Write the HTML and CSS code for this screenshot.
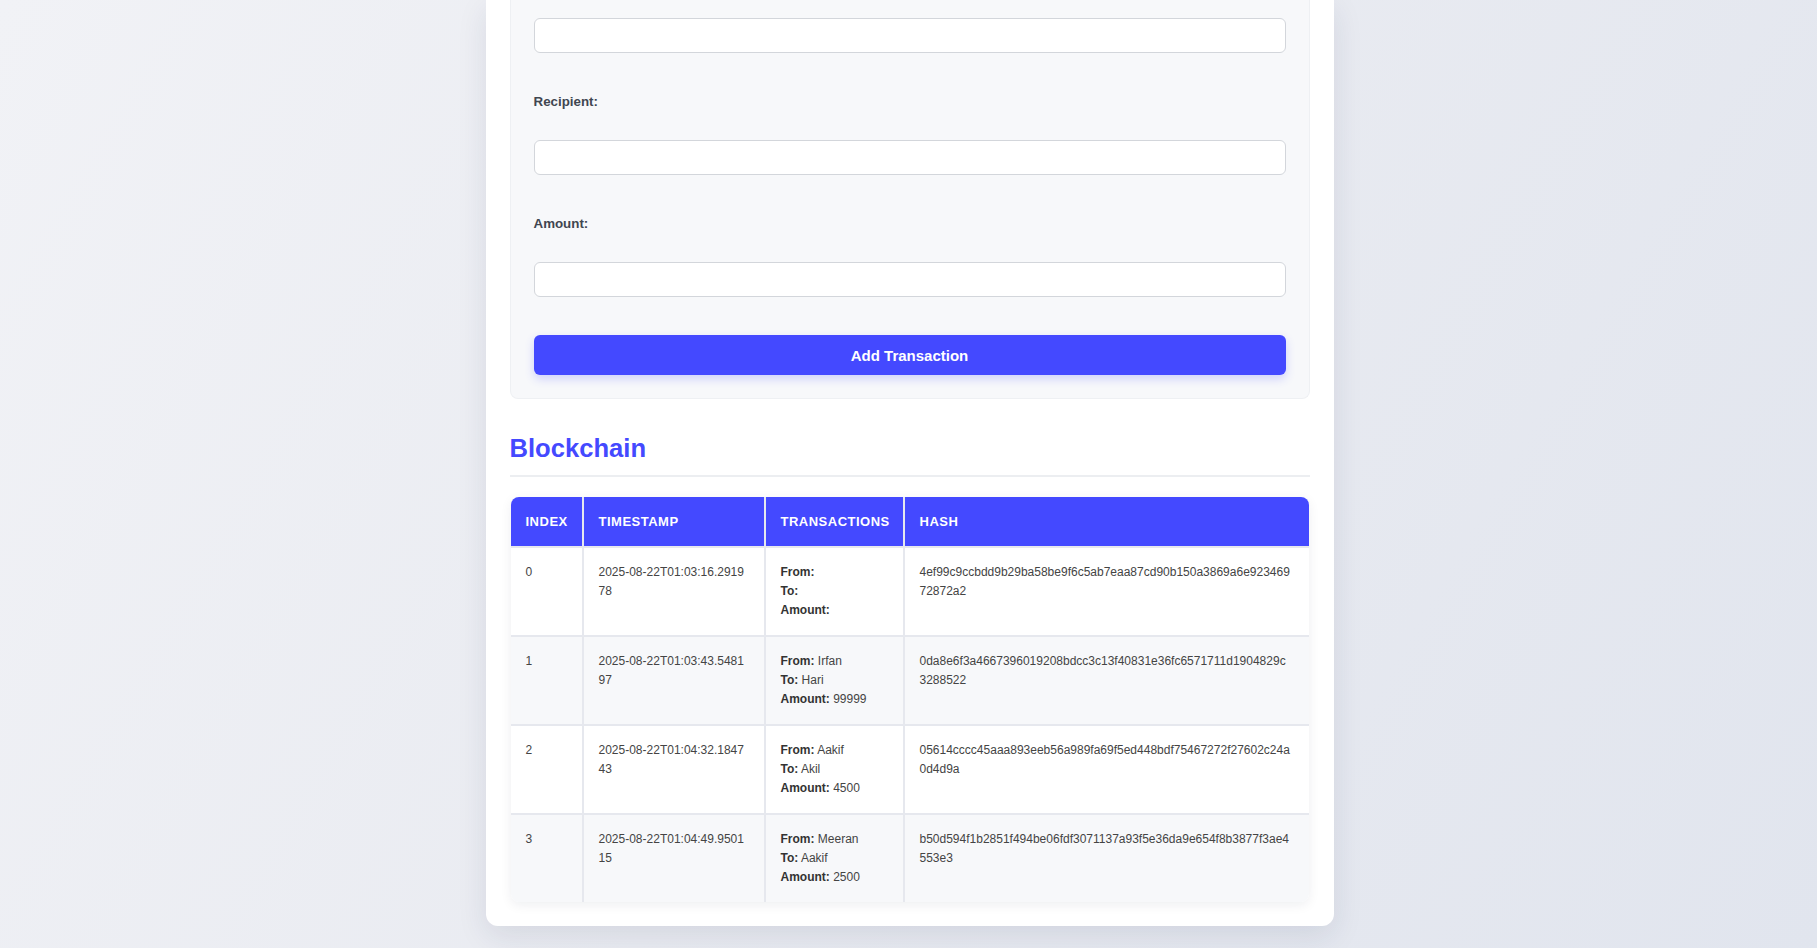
FILE: index.html
```html
<!DOCTYPE html>
<html lang="en">
<head>
<meta charset="utf-8">
<title>Blockchain</title>
<link rel="stylesheet" href="styles.css">
</head>
<body>
<main class="card">
  <section class="form-box">
    <input class="field" type="text">
    <label class="label">Recipient:</label>
    <input class="field" type="text">
    <label class="label">Amount:</label>
    <input class="field field-last" type="number">
    <button class="btn" type="button">Add Transaction</button>
  </section>

  <h2 class="chain-title">Blockchain</h2>

  <div class="table-wrap">
    <table class="chain">
      <colgroup>
        <col class="c-index">
        <col class="c-time">
        <col class="c-tx">
        <col class="c-hash">
      </colgroup>
      <thead>
        <tr><th>Index</th><th>Timestamp</th><th>Transactions</th><th>Hash</th></tr>
      </thead>
      <tbody>
        <tr>
          <td>0</td>
          <td class="wrap">2025-08-22T01:03:16.291978</td>
          <td><strong>From:</strong> <br><strong>To:</strong> <br><strong>Amount:</strong> </td>
          <td class="wrap hash">4ef99c9ccbdd9b29ba58be9f6c5ab7eaa87cd90b150a3869a6e92346972872a2</td>
        </tr>
        <tr>
          <td>1</td>
          <td class="wrap">2025-08-22T01:03:43.548197</td>
          <td><strong>From:</strong> Irfan<br><strong>To:</strong> Hari<br><strong>Amount:</strong> 99999</td>
          <td class="wrap hash">0da8e6f3a4667396019208bdcc3c13f40831e36fc6571711d1904829c3288522</td>
        </tr>
        <tr>
          <td>2</td>
          <td class="wrap">2025-08-22T01:04:32.184743</td>
          <td><strong>From:</strong> Aakif<br><strong>To:</strong> Akil<br><strong>Amount:</strong> 4500</td>
          <td class="wrap hash">05614cccc45aaa893eeb56a989fa69f5ed448bdf75467272f27602c24a0d4d9a</td>
        </tr>
        <tr>
          <td>3</td>
          <td class="wrap">2025-08-22T01:04:49.950115</td>
          <td><strong>From:</strong> Meeran<br><strong>To:</strong> Aakif<br><strong>Amount:</strong> 2500</td>
          <td class="wrap hash">b50d594f1b2851f494be06fdf3071137a93f5e36da9e654f8b3877f3ae4553e3</td>
        </tr>
      </tbody>
    </table>
  </div>
</main>
</body>
</html>
```

FILE: styles.css
```css
* { box-sizing: border-box; }

html, body {
  margin: 0;
  padding: 0;
}

body {
  min-height: 948px;
  background: linear-gradient(120deg, #f1f2f6 0%, #e9ebf1 50%, #e1e5ee 100%);
  font-family: "Liberation Sans", Arial, sans-serif;
  color: #444;
  padding-bottom: 22px;
}

.card {
  width: 848px;
  margin: 0 auto;
  position: relative;
  left: 1px;
  background: #ffffff;
  border-radius: 0 0 12px 12px;
  padding: 0 24px 24px;
  box-shadow: 0 10px 30px rgba(30, 40, 80, 0.10);
}

.form-box {
  display: flex;
  flex-direction: column;
  background: #f7f8fa;
  border: 1px solid #eef0f3;
  border-top: none;
  border-radius: 0 0 8px 8px;
  padding: 18px 23px 23px;
}

.field {
  display: block;
  width: 100%;
  height: 35px;
  border: 1px solid #d3d6db;
  border-radius: 6px;
  background: #ffffff;
  margin: 0 0 41px;
  font: inherit;
}

.field-last {
  margin-bottom: 38px;
}

.label {
  display: block;
  font-size: 13.33px;
  line-height: 15px;
  font-weight: bold;
  color: #404650;
  margin: 0 0 31px;
}

.btn {
  display: block;
  width: 100%;
  height: 40px;
  border: none;
  border-radius: 6px;
  background: #4449ff;
  color: #ffffff;
  font-family: "Liberation Sans", Arial, sans-serif;
  font-size: 15px;
  font-weight: bold;
  box-shadow: 0 4px 10px rgba(68, 73, 255, 0.22);
}

.chain-title {
  margin: 35px 0 20px;
  padding: 0 0 12px;
  font-size: 25.6px;
  font-weight: bold;
  color: #4449ff;
  border-bottom: 2px solid #eceef1;
  line-height: 29px;
}

.table-wrap {
  margin: 0 1px;
  border-radius: 8px;
  overflow: hidden;
  box-shadow: 0 3px 12px rgba(20, 30, 60, 0.07);
}

.chain {
  width: 100%;
  border-collapse: collapse;
  table-layout: fixed;
  font-size: 12px;
}

.c-index { width: 72px; }
.c-time { width: 182px; }
.c-tx { width: 139px; }
.c-hash { width: 405px; }

.chain th {
  background: #4449ff;
  color: #ffffff;
  text-align: left;
  text-transform: uppercase;
  font-size: 13px;
  font-weight: bold;
  letter-spacing: 0.5px;
  line-height: 19px;
  padding: 15px;
  border-right: 2px solid #e6e8ee;
  border-bottom: 2px solid #e6e8ee;
}

.chain td {
  vertical-align: top;
  line-height: 19px;
  padding: 15px;
  color: #444;
  border-right: 2px solid #e6e8ee;
  border-bottom: 2px solid #e6e8ee;
}

.chain td.hash {
  padding-right: 17px;
}

.chain th:last-child,
.chain td:last-child {
  border-right: none;
}

.chain tbody tr:last-child td {
  border-bottom: none;
}

.chain tbody tr:nth-child(even) td {
  background: #f7f8fa;
}

.chain tbody tr:nth-child(odd) td {
  background: #ffffff;
}

.chain strong {
  color: #333;
}

.wrap {
  word-break: break-all;
}
```
